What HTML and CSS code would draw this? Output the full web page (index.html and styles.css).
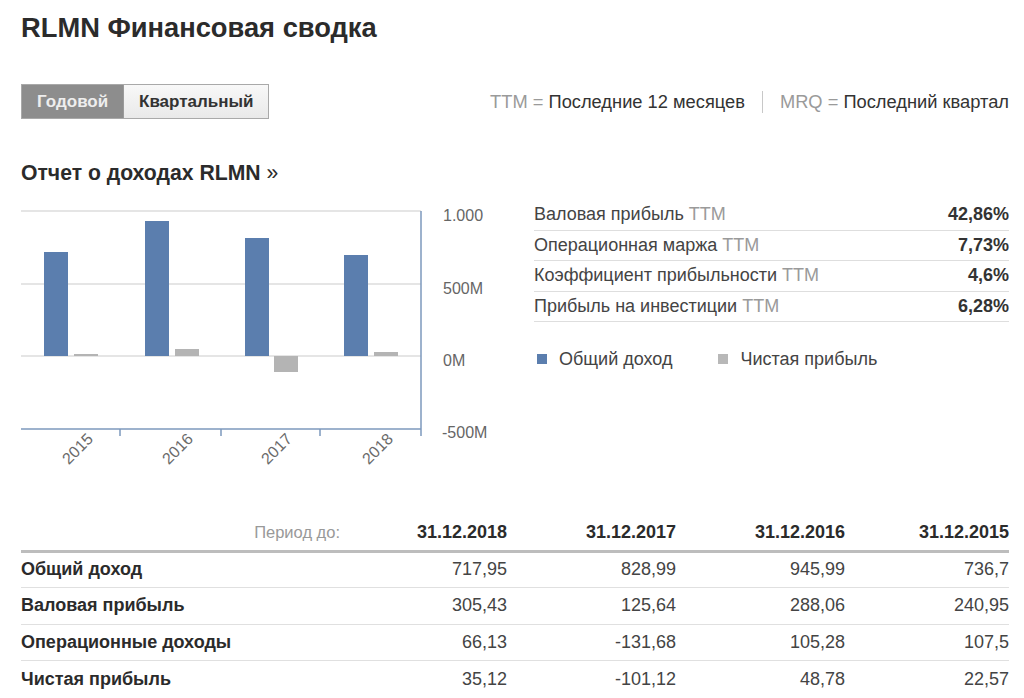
FILE: index.html
```html
<!DOCTYPE html>
<html lang="ru">
<head>
<meta charset="utf-8">
<title>RLMN Финансовая сводка</title>
<link rel="stylesheet" href="styles.css">
</head>
<body>
<div class="page">
  <h1 class="title">RLMN Финансовая сводка</h1>

  <div class="toolbar">
    <div class="tabs">
      <span class="tab tab-active">Годовой</span>
      <span class="tab">Квартальный</span>
    </div>
    <div class="legend-note"><span class="muted">TTM =</span> Последние 12 месяцев<span class="sep"></span><span class="muted">MRQ =</span> Последний квартал</div>
  </div>

  <h2 class="section-title">Отчет о доходах RLMN <span class="raquo">»</span></h2>

  <div class="chart-row">
    <div class="chart-box">
      <svg class="chart" width="492" height="275" viewBox="0 0 492 275">
        <g stroke="#dcdcdc" stroke-width="1.5">
          <line x1="0" y1="11" x2="400" y2="11"/>
          <line x1="0" y1="84" x2="400" y2="84"/>
          <line x1="0" y1="156" x2="400" y2="156"/>
        </g>
        <g fill="#5b7eae">
          <rect x="23" y="52" width="24" height="104"/>
          <rect x="124" y="21" width="24" height="135"/>
          <rect x="224" y="38" width="24" height="118"/>
          <rect x="323" y="55" width="24" height="101"/>
        </g>
        <g fill="#b4b4b4">
          <rect x="53" y="154" width="24" height="2"/>
          <rect x="154" y="149" width="24" height="7"/>
          <rect x="253" y="156" width="24" height="16"/>
          <rect x="353" y="152" width="24" height="4"/>
        </g>
        <g stroke="#7c98bd" stroke-width="1.5">
          <line x1="0" y1="229" x2="400" y2="229"/>
          <line x1="400" y1="11" x2="400" y2="236"/>
          <line x1="99" y1="229" x2="99" y2="236"/>
          <line x1="200" y1="229" x2="200" y2="236"/>
          <line x1="299" y1="229" x2="299" y2="236"/>
        </g>
        <g class="axis-label">
          <text x="422" y="21">1.000</text>
          <text x="422" y="94">500M</text>
          <text x="422" y="166">0M</text>
          <text x="421" y="238">-500M</text>
        </g>
        <g class="year-label">
          <text transform="translate(73 240) rotate(-45)" text-anchor="end">2015</text>
          <text transform="translate(173 240) rotate(-45)" text-anchor="end">2016</text>
          <text transform="translate(272 240) rotate(-45)" text-anchor="end">2017</text>
          <text transform="translate(373 240) rotate(-45)" text-anchor="end">2018</text>
        </g>
      </svg>
    </div>

    <div class="side">
      <div class="ratios">
        <div class="ratio"><span>Валовая прибыль <span class="muted">TTM</span></span><b>42,86%</b></div>
        <div class="ratio"><span>Операционная маржа <span class="muted">TTM</span></span><b>7,73%</b></div>
        <div class="ratio"><span>Коэффициент прибыльности <span class="muted">TTM</span></span><b>4,6%</b></div>
        <div class="ratio"><span>Прибыль на инвестиции <span class="muted">TTM</span></span><b>6,28%</b></div>
      </div>
      <div class="legend">
        <span class="key"><i class="swatch swatch-blue"></i>Общий доход</span>
        <span class="key"><i class="swatch swatch-gray"></i>Чистая прибыль</span>
      </div>
    </div>
  </div>

  <table class="fin">
    <colgroup>
      <col class="c-label">
      <col class="c-a">
      <col class="c-b">
      <col class="c-b">
      <col class="c-c">
    </colgroup>
    <thead>
      <tr>
        <th class="period">Период до:</th>
        <th>31.12.2018</th>
        <th>31.12.2017</th>
        <th>31.12.2016</th>
        <th>31.12.2015</th>
      </tr>
    </thead>
    <tbody>
      <tr><td>Общий доход</td><td>717,95</td><td>828,99</td><td>945,99</td><td>736,7</td></tr>
      <tr><td>Валовая прибыль</td><td>305,43</td><td>125,64</td><td>288,06</td><td>240,95</td></tr>
      <tr><td>Операционные доходы</td><td>66,13</td><td>-131,68</td><td>105,28</td><td>107,5</td></tr>
      <tr><td>Чистая прибыль</td><td>35,12</td><td>-101,12</td><td>48,78</td><td>22,57</td></tr>
    </tbody>
  </table>
</div>
</body>
</html>
```

FILE: styles.css
```css
* { box-sizing: border-box; }
html, body { margin: 0; padding: 0; background: #fff; }
body {
  font-family: "Liberation Sans", Arial, sans-serif;
  color: #333;
  overflow: hidden;
}
.page {
  width: 1024px;
  height: 698px;
  padding: 13px 15px 0 21px;
}
.title {
  margin: 0;
  font-size: 27.3px;
  line-height: 30px;
  font-weight: bold;
  color: #2b2b2b;
}
.toolbar {
  margin-top: 41px;
  display: flex;
  justify-content: space-between;
  align-items: center;
  height: 35px;
}
.tabs {
  display: flex;
  height: 35px;
  border: 1px solid #a9a9a9;
}
.tab {
  display: flex;
  align-items: center;
  padding: 0 15px;
  font-size: 17px;
  font-weight: bold;
  color: #333;
  background: linear-gradient(#f8f8f8, #e9e9e9);
}
.tab-active {
  background: #8d8d8d;
  color: #eee;
  border-right: 1px solid #9a9a9a;
  width: 102px;
}
.legend-note {
  font-size: 18.3px;
  line-height: 24px;
  color: #333;
  white-space: nowrap;
}
.muted { color: #9a9a9a; }
.sep {
  display: inline-block;
  width: 1px;
  height: 22px;
  background: #c8c8c8;
  margin: 0 17px;
  vertical-align: -5px;
}
.section-title {
  margin: 42px 0 0;
  font-size: 21.2px;
  line-height: 24px;
  font-weight: bold;
  color: #2b2b2b;
}
.raquo { font-weight: normal; }
.chart-row {
  margin-top: 15px;
  display: flex;
  height: 275px;
}
.chart-box {
  width: 513px;
  flex: none;
}
.chart { display: block; overflow: hidden; }
.axis-label text {
  font-family: "Liberation Sans", Arial, sans-serif;
  font-size: 16px;
  fill: #666;
}
.year-label text {
  font-family: "Liberation Sans", Arial, sans-serif;
  font-size: 16px;
  fill: #6a6a6a;
}
.side { flex: 1; }
.ratio {
  display: flex;
  justify-content: space-between;
  align-items: center;
  height: 30.5px;
  border-bottom: 1.5px solid #dedede;
  font-size: 18px;
  color: #444;
}
.ratio b { color: #333; }
.legend {
  margin-top: 26px;
  display: flex;
  gap: 46px;
  font-size: 18px;
  color: #444;
  padding-left: 3px;
  line-height: 22px;
}
.key { display: flex; align-items: center; }
.swatch {
  display: inline-block;
  width: 10px;
  height: 10px;
  margin-right: 12px;
}
.swatch-blue { background: #5b7eae; }
.swatch-gray { background: #b8b8b8; }
.fin {
  margin-top: 40px;
  width: 988px;
  border-collapse: collapse;
  table-layout: fixed;
  font-size: 18px;
}
.c-label { width: 319px; }
.c-a { width: 167px; }
.c-b { width: 169px; }
.c-c { width: 164px; }
.fin th {
  height: 36px;
  text-align: right;
  font-weight: bold;
  color: #2b2b2b;
  padding: 0;
  border-bottom: 3px solid #bdbdbd;
}
.fin th.period {
  font-weight: normal;
  color: #999;
  font-size: 16.5px;
}
.fin td {
  height: 36.5px;
  padding: 0;
  text-align: right;
  color: #444;
  border-bottom: 1.5px solid #e0e0e0;
}
.fin td:first-child {
  text-align: left;
  font-weight: bold;
  color: #2b2b2b;
}
.fin tbody tr:last-child td { border-bottom: none; }
```
